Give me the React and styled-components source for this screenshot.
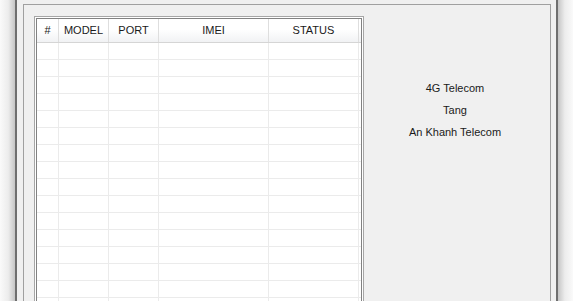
import React from "react";
import styled, { createGlobalStyle } from "styled-components";

const GlobalStyle = createGlobalStyle`
  html, body {
    margin: 0;
    padding: 0;
    background: #ffffff;
    overflow: hidden;
  }
  body {
    font-family: "Liberation Sans", Arial, sans-serif;
    font-size: 11px;
    color: #000;
  }
`;

const columns = [
  { title: "#", width: 22 },
  { title: "MODEL", width: 50 },
  { title: "PORT", width: 50 },
  { title: "IMEI", width: 110 },
  { title: "STATUS", width: 90 },
];

const labels = ["4G Telecom", "Tang", "An Khanh Telecom"];

const Screen = styled.div`
  display: flex;
  width: 573px;
  height: 301px;
  overflow: hidden;
`;

// window shadow on both sides
const Shadow = styled.div`
  width: 15px;
  flex-shrink: 0;
  background: linear-gradient(
    ${(p) => (p.side === "left" ? "to right" : "to left")},
    #fafafa 0%,
    #ececec 55%,
    #c6c6c6 100%
  );
`;

const Window = styled.div`
  width: 543px;
  flex-shrink: 0;
  box-sizing: border-box;
  border-left: 2px solid #6f6f6f;
  border-right: 2px solid #6f6f6f;
  background: #f0f0f0;
  padding: 4px 5px 0 6px;
  display: flex;
`;

const Panel = styled.div`
  flex: 1;
  height: 320px;
  border: 1px solid #a0a0a0;
  border-bottom: none;
  padding: 11px 0 0 10px;
  display: flex;
`;

const GridFrame = styled.div`
  width: 330px;
  height: 320px;
  flex-shrink: 0;
  box-sizing: border-box;
  border: 1px solid #a6a6a6;
  padding: 1px;
  background: #ffffff;
`;

const GridInner = styled.div`
  height: 100%;
  box-sizing: border-box;
  border: 1px solid #828282;
  background: #ffffff;
  overflow: hidden;
`;

const HeaderRow = styled.div`
  display: flex;
  height: 24px;
  box-sizing: border-box;
  border-bottom: 1px solid #d5d5d5;
  background: linear-gradient(#ffffff 0%, #ffffff 45%, #f1f2f4 100%);
`;

const HeaderCell = styled.div`
  width: ${(p) => p.width}px;
  flex-shrink: 0;
  box-sizing: border-box;
  border-right: 1px solid #dedede;
  display: flex;
  align-items: center;
  justify-content: center;
  line-height: 13px;
  color: #1a1a1a;
`;

const Row = styled.div`
  display: flex;
  height: 17px;
  box-sizing: border-box;
  border-bottom: 1px solid #ebebeb;
`;

const Cell = styled.div`
  width: ${(p) => p.width}px;
  flex-shrink: 0;
  box-sizing: border-box;
  border-right: 1px solid #ebebeb;
`;

const InfoColumn = styled.div`
  flex: 1;
  display: flex;
  flex-direction: column;
  align-items: center;
  gap: 9px;
  padding: 66px 4px 0 0;
`;

const InfoLabel = styled.div`
  line-height: 13px;
  white-space: nowrap;
  color: #1a1a1a;
`;

export default function App() {
  const rows = Array.from({ length: 17 }, (_, i) => i);
  return (
    <>
      <GlobalStyle />
      <Screen>
        <Shadow side="left" />
        <Window>
          <Panel>
            <GridFrame>
              <GridInner>
                <HeaderRow>
                  {columns.map((c) => (
                    <HeaderCell key={c.title} width={c.width}>
                      {c.title}
                    </HeaderCell>
                  ))}
                </HeaderRow>
                {rows.map((r) => (
                  <Row key={r}>
                    {columns.map((c) => (
                      <Cell key={c.title} width={c.width} />
                    ))}
                  </Row>
                ))}
              </GridInner>
            </GridFrame>
            <InfoColumn>
              {labels.map((l) => (
                <InfoLabel key={l}>{l}</InfoLabel>
              ))}
            </InfoColumn>
          </Panel>
        </Window>
        <Shadow side="right" />
      </Screen>
    </>
  );
}
